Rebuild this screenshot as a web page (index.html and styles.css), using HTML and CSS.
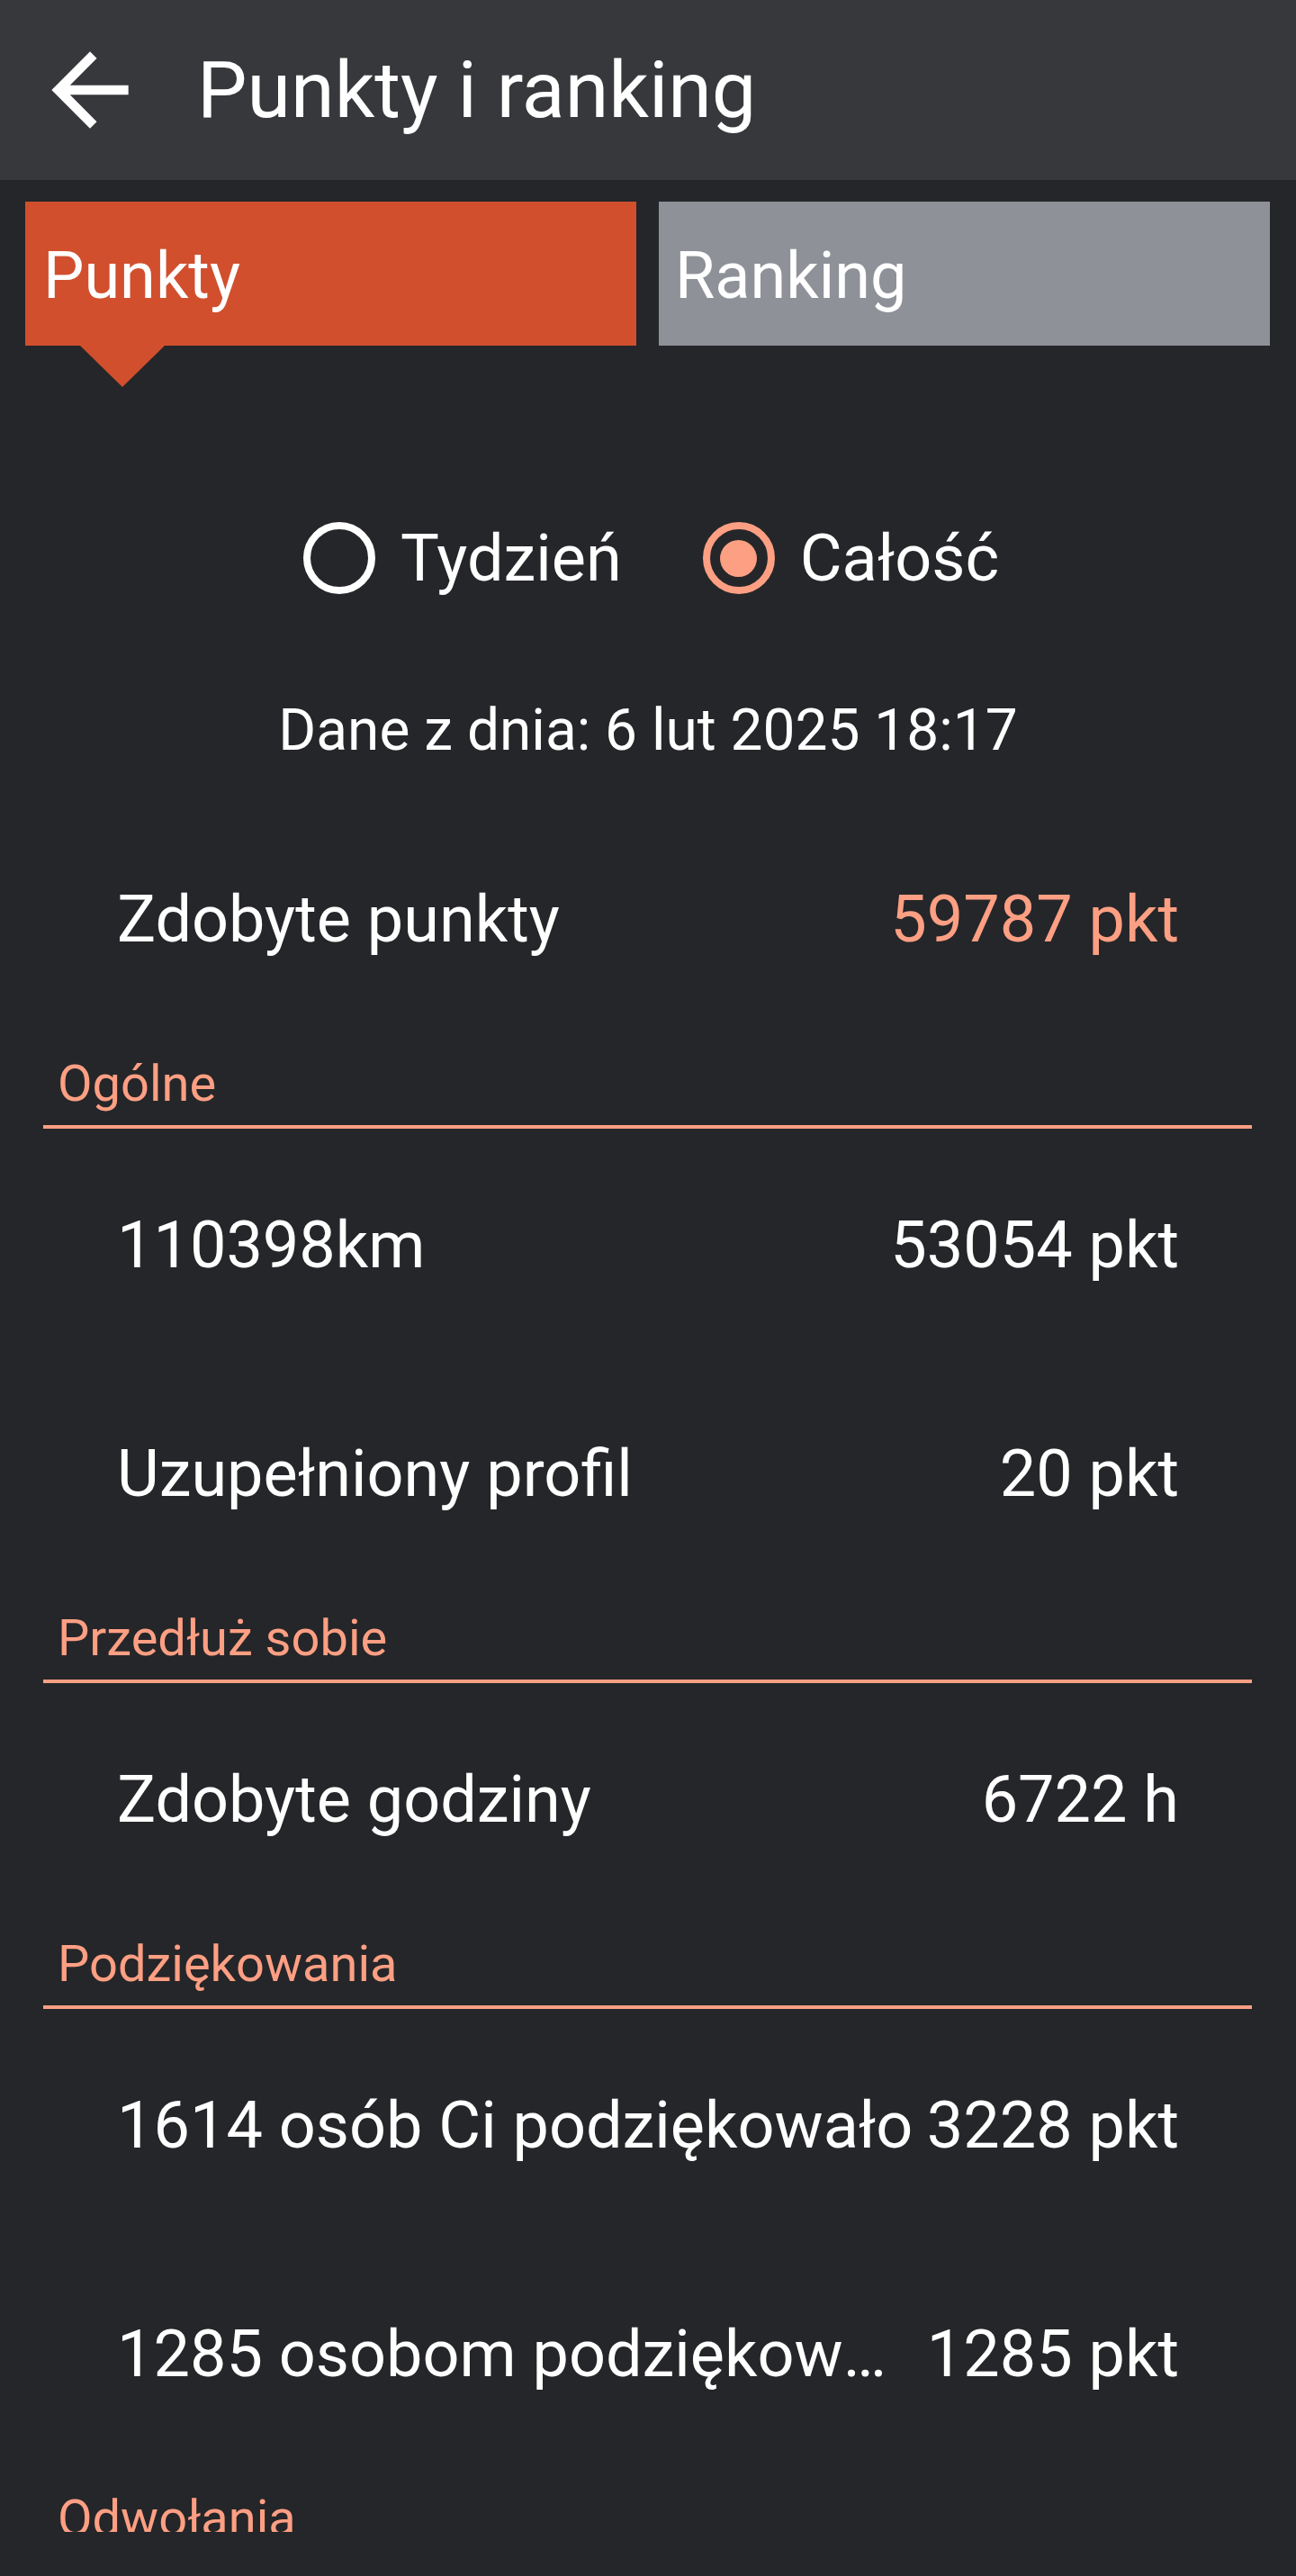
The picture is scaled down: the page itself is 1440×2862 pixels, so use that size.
FILE: index.html
```html
<!DOCTYPE html>
<html lang="pl">
<head>
<meta charset="utf-8">
<title>Punkty i ranking</title>
<link rel="stylesheet" href="styles.css">
</head>
<body>
<div class="app">
  <header class="appbar">
    <svg class="back" viewBox="0 0 24 24" aria-hidden="true">
      <path d="M20 11H7.83l5.59-5.59L12 4l-8 8 8 8 1.41-1.41L7.83 13H20v-2z" fill="#ffffff"/>
    </svg>
    <h1 class="title">Punkty i ranking</h1>
  </header>

  <nav class="tabs">
    <div class="tab tab-active">Punkty</div>
    <div class="tab tab-idle">Ranking</div>
  </nav>

  <main class="scroll">
    <div class="radios">
      <div class="radio">
        <span class="radio-ring"></span>
        <span class="radio-label">Tydzień</span>
      </div>
      <div class="radio radio-on">
        <span class="radio-ring"><span class="radio-dot"></span></span>
        <span class="radio-label">Całość</span>
      </div>
    </div>

    <p class="date">Dane z dnia: 6 lut 2025 18:17</p>

    <div class="row row-total">
      <span class="label">Zdobyte punkty</span>
      <span class="value accent">59787 pkt</span>
    </div>

    <div class="sect-title">Ogólne</div>
    <div class="divider"></div>
    <div class="row">
      <span class="label">110398km</span>
      <span class="value">53054 pkt</span>
    </div>
    <div class="row">
      <span class="label">Uzupełniony profil</span>
      <span class="value">20 pkt</span>
    </div>

    <div class="sect-title">Przedłuż sobie</div>
    <div class="divider"></div>
    <div class="row">
      <span class="label">Zdobyte godziny</span>
      <span class="value">6722 h</span>
    </div>

    <div class="sect-title">Podziękowania</div>
    <div class="divider"></div>
    <div class="row">
      <span class="label">1614 osób Ci podziękowało</span>
      <span class="value">3228 pkt</span>
    </div>
    <div class="row">
      <span class="label">1285 osobom podziękowałeś</span>
      <span class="value">1285 pkt</span>
    </div>

    <div class="sect-title">Odwołania</div>
    <div class="divider"></div>
  </main>
</div>
</body>
</html>
```

FILE: styles.css
```css
* { box-sizing: border-box; }

html, body {
  margin: 0;
  padding: 0;
}

body {
  background: #252629;
  color: #ffffff;
  font-family: Roboto, "Noto Sans", "Liberation Sans", sans-serif;
  width: 1440px;
  height: 2862px;
  overflow: hidden;
}

.app {
  display: flex;
  flex-direction: column;
  height: 2862px;
}

.appbar {
  height: 200px;
  flex: 0 0 200px;
  background: #37383c;
  display: flex;
  align-items: center;
  padding-left: 36px;
}

.back {
  width: 128px;
  height: 128px;
  flex: 0 0 128px;
}

.title {
  margin: 0 0 0 55px;
  font-size: 88px;
  font-weight: 400;
  line-height: 104px;
  color: #ffffff;
}

.tabs {
  display: grid;
  grid-template-columns: 1fr 1fr;
  gap: 25px;
  padding: 24px 29px 0 28px;
  flex: 0 0 184px;
}

.tab {
  height: 160px;
  display: flex;
  align-items: center;
  padding-top: 5px;
  font-size: 72px;
  line-height: 84px;
  color: #ffffff;
  position: relative;
}

.tab-active {
  background: #d14f2d;
  padding-left: 20px;
}

.tab-active::after {
  content: "";
  position: absolute;
  left: 61px;
  top: 100%;
  width: 0;
  height: 0;
  border-left: 47px solid transparent;
  border-right: 47px solid transparent;
  border-top: 46px solid #d14f2d;
}

.tab-idle {
  background: #8e9197;
  padding-left: 18px;
}

.scroll {
  height: 2429px;
  flex: 0 0 2429px;
  overflow: hidden;
  display: flex;
  flex-direction: column;
}

.radios {
  margin-top: 196px;
  height: 80px;
  display: flex;
  justify-content: center;
  align-items: center;
  gap: 90px;
  padding-left: 7px;
}

.radio {
  display: flex;
  align-items: center;
  gap: 28px;
}

.radio-ring {
  width: 80px;
  height: 80px;
  border-radius: 50%;
  border: 8px solid #ffffff;
  display: flex;
  align-items: center;
  justify-content: center;
}

.radio-on .radio-ring {
  border-color: #fd9f83;
}

.radio-dot {
  width: 41px;
  height: 41px;
  border-radius: 50%;
  background: #fd9f83;
}

.radio-label {
  font-size: 72px;
  line-height: 84px;
  padding-top: 2px;
}

.date {
  margin: 115px 0 0;
  text-align: center;
  font-size: 64px;
  line-height: 74px;
}

.row {
  flex: 0 0 254px;
  height: 254px;
  display: flex;
  align-items: center;
  padding: 6px 130px 0;
  font-size: 72px;
  line-height: 84px;
}

.row-total {
  margin-top: 43px;
}

.label {
  flex: 1 1 auto;
  min-width: 0;
  white-space: nowrap;
  overflow: hidden;
  text-overflow: ellipsis;
}

.value {
  flex: 0 0 auto;
  margin-left: 14px;
  white-space: nowrap;
}

.accent {
  color: #fd9f83;
}

.sect-title {
  flex: 0 0 104px;
  height: 104px;
  padding: 25px 0 0 64px;
  font-size: 56px;
  line-height: 66px;
  color: #fd9f83;
}

.divider {
  flex: 0 0 4px;
  height: 4px;
  margin: 0 49px 0 48px;
  background: #fd9f83;
}
```
